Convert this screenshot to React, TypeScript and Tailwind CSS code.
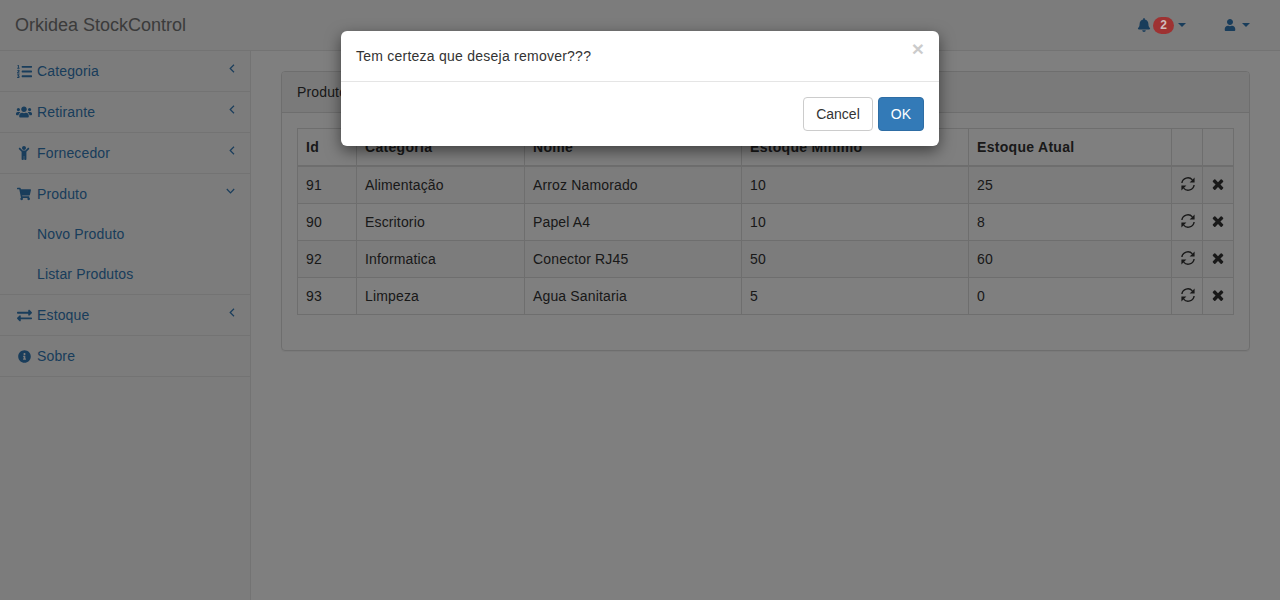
import type { ReactNode } from "react";
import {
  FaBell,
  FaChild,
  FaExchangeAlt,
  FaInfoCircle,
  FaListOl,
  FaShoppingCart,
  FaUser,
  FaUsers,
} from "react-icons/fa";

const produtos = [
  { id: 91, categoria: "Alimentação", nome: "Arroz Namorado", minimo: 10, atual: 25 },
  { id: 90, categoria: "Escritorio", nome: "Papel A4", minimo: 10, atual: 8 },
  { id: 92, categoria: "Informatica", nome: "Conector RJ45", minimo: 50, atual: 60 },
  { id: 93, categoria: "Limpeza", nome: "Agua Sanitaria", minimo: 5, atual: 0 },
];

function RefreshIcon() {
  return (
    <svg viewBox="0 0 16 16" className="mb-[2px] h-[16px] w-[16px]">
      <path d="M1.9 7A6 6 0 0 1 12.4 3.9M14.1 9A6 6 0 0 1 3.6 12.1" fill="none" stroke="currentColor" strokeWidth="1.4" />
      <path d="M14.6 1.5v5h-5zM1.4 14.5v-5h5z" fill="currentColor" />
    </svg>
  );
}

function RemoveIcon() {
  return (
    <svg viewBox="0 0 1792 1792" className="-ml-[1px] mb-[2px] h-[16px] w-[16px]" fill="currentColor">
      <path d="M1490 1322q0 40-28 68l-136 136q-28 28-68 28t-68-28l-294-294-294 294q-28 28-68 28t-68-28l-136-136q-28-28-28-68t28-68l294-294-294-294q-28-28-28-68t28-68l136-136q28-28 68-28t68 28l294 294 294-294q28-28 68-28t68 28l136 136q28 28 28 68t-28 68l-294 294 294 294q28 28 28 68z" />
    </svg>
  );
}

function Caret() {
  return <span className="h-0 w-0 border-x-[4px] border-t-[4px] border-x-transparent border-t-[#337ab7]" />;
}

function AngleLeft() {
  return (
    <svg viewBox="0 0 6 9" className="mb-[6px] mr-[1px] h-[9px] w-[6px]" fill="none" stroke="currentColor" strokeWidth="1.2">
      <path d="M5 .8 1.2 4.5 5 8.2" />
    </svg>
  );
}

function AngleDown() {
  return (
    <svg viewBox="0 0 9 6" className="mb-[6px] mr-[1px] h-[6px] w-[9px]" fill="none" stroke="currentColor" strokeWidth="1.2">
      <path d="M.8 1 4.5 4.8 8.2 1" />
    </svg>
  );
}

function MenuRow({ icon, label, arrow }: { icon: ReactNode; label: string; arrow?: ReactNode }) {
  return (
    <div className="flex h-[40px] items-center pl-[15px] pr-[14px] text-[#337ab7]">
      <span className="mr-1 flex w-[18px] justify-center">{icon}</span>
      <span className="flex-1">{label}</span>
      {arrow}
    </div>
  );
}

const th = "border border-[#ddd] border-b-2 px-2 py-2 text-left font-bold tracking-[0.3px]";
const td = "border border-[#ddd] px-2 py-2";

export default function App() {
  return (
    <div className="relative h-[600px] w-[1280px] overflow-hidden bg-[#f8f8f8] font-['Liberation_Sans',Arial,sans-serif] text-[14px] leading-[20px] tracking-[0.15px] text-[#333]">
      <header className="flex h-[51px] items-center border-b border-[#e7e7e7] pl-[15px] pr-[30px]">
        <span className="flex-1 text-[18px] tracking-normal text-[#777]">Orkidea StockControl</span>
        <div className="flex items-center text-[#337ab7]">
          <FaBell className="text-[14px]" />
          {/* the badge stays bright in the picture: it sits above the backdrop */}
          <span className="relative z-10 ml-[2px] rounded-[10px] bg-[#9e3232] px-[7px] py-[3px] text-[12px] font-bold leading-[11px] tracking-normal text-[#d0bcbc]">
            2
          </span>
          <span className="ml-[4px] flex">
            <Caret />
          </span>
          <FaUser className="ml-[38px] text-[12px]" />
          <span className="ml-[6px] flex">
            <Caret />
          </span>
        </div>
      </header>

      <div className="flex h-[549px]">
        <aside className="w-[250px] shrink-0">
          <div className="border-b border-[#e7e7e7]">
            <MenuRow icon={<FaListOl className="text-[15px]" />} label="Categoria" arrow={<AngleLeft />} />
          </div>
          <div className="border-b border-[#e7e7e7]">
            <MenuRow icon={<FaUsers className="text-[16px]" />} label="Retirante" arrow={<AngleLeft />} />
          </div>
          <div className="border-b border-[#e7e7e7]">
            <MenuRow icon={<FaChild className="text-[14px]" />} label="Fornecedor" arrow={<AngleLeft />} />
          </div>
          <div className="border-b border-[#e7e7e7]">
            <MenuRow icon={<FaShoppingCart className="text-[14px]" />} label="Produto" arrow={<AngleDown />} />
            <div className="flex h-[40px] items-center pl-[37px] text-[#337ab7]">Novo Produto</div>
            <div className="flex h-[40px] items-center pl-[37px] text-[#337ab7]">Listar Produtos</div>
          </div>
          <div className="border-b border-[#e7e7e7]">
            <MenuRow icon={<FaExchangeAlt className="text-[15px]" />} label="Estoque" arrow={<AngleLeft />} />
          </div>
          <div className="border-b border-[#e7e7e7]">
            <MenuRow icon={<FaInfoCircle className="text-[13px]" />} label="Sobre" />
          </div>
        </aside>

        <main className="flex-1 border-l border-[#e7e7e7] bg-white px-[30px] pt-[20px]">
          <section className="h-[280px] rounded-[4px] border border-[#ddd] shadow-[0_1px_1px_rgba(0,0,0,0.05)]">
            <div className="h-[41px] rounded-t-[3px] border-b border-[#ddd] bg-[#f5f5f5] px-[15px] py-[10px]">
              Produtos
            </div>
            <div className="p-[15px]">
              <table className="w-[936px] table-fixed border-collapse">
                <colgroup>
                  <col className="w-[59px]" />
                  <col className="w-[168px]" />
                  <col className="w-[217px]" />
                  <col className="w-[227px]" />
                  <col className="w-[203px]" />
                  <col className="w-[31px]" />
                  <col className="w-[31px]" />
                </colgroup>
                <thead>
                  <tr>
                    <th className={th}>Id</th>
                    <th className={th}>Categoria</th>
                    <th className={th}>Nome</th>
                    <th className={th}>Estoque Mínimo</th>
                    <th className={th}>Estoque Atual</th>
                    <th className={th} />
                    <th className={th} />
                  </tr>
                </thead>
                <tbody>
                  {produtos.map((p) => (
                    <tr key={p.id} className="odd:bg-[#f9f9f9]">
                      <td className={td}>{p.id}</td>
                      <td className={td}>{p.categoria}</td>
                      <td className={td}>{p.nome}</td>
                      <td className={td}>{p.minimo}</td>
                      <td className={td}>{p.atual}</td>
                      <td className={td}>
                        <RefreshIcon />
                      </td>
                      <td className={td}>
                        <RemoveIcon />
                      </td>
                    </tr>
                  ))}
                </tbody>
              </table>
            </div>
          </section>
        </main>
      </div>

      {/* backdrop + modal lie over the page */}
      <div className="absolute inset-0 bg-black/50" />
      <div className="absolute left-[341px] top-[31px] w-[598px] rounded-[6px] bg-white tracking-normal shadow-[0_5px_15px_rgba(0,0,0,0.5)]">
        <div className="relative h-[51px] border-b border-[#e5e5e5] px-[15px] pt-[15px] tracking-[0.24px]">
          Tem certeza que deseja remover???
          <span className="absolute right-[15px] top-[7px] text-[21px] font-bold leading-[21px] tracking-normal text-[#000] opacity-20">
            ×
          </span>
        </div>
        <div className="flex h-[64px] items-start justify-end gap-[5px] px-[15px] pt-[15px]">
          <button className="h-[34px] rounded-[4px] border border-[#ccc] bg-white px-3 text-[#333]">Cancel</button>
          <button className="h-[34px] rounded-[4px] border border-[#2e6da4] bg-[#337ab7] px-3 text-white">OK</button>
        </div>
      </div>
    </div>
  );
}
